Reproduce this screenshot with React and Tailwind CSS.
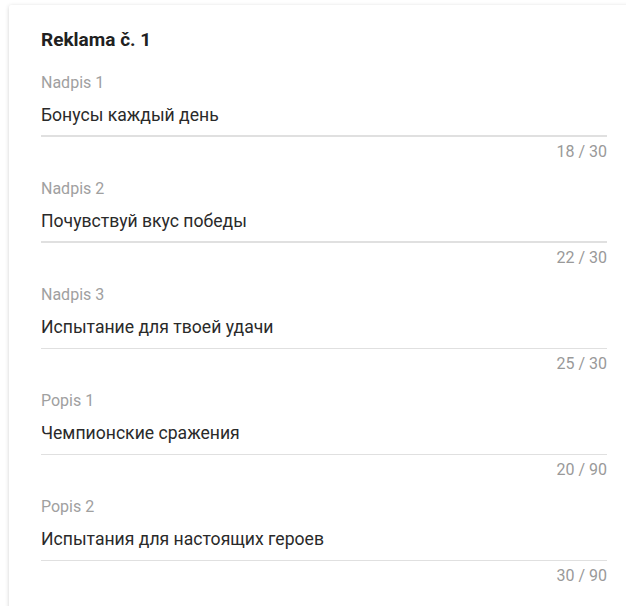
import React from 'react';

const fields = [
    { label: 'Nadpis 1', value: 'Бонусы каждый день', max: 30, thick: true },
    { label: 'Nadpis 2', value: 'Почувствуй вкус победы', max: 30, thick: true },
    { label: 'Nadpis 3', value: 'Испытание для твоей удачи', max: 30 },
    { label: 'Popis 1', value: 'Чемпионские сражения', max: 90 },
    { label: 'Popis 2', value: 'Испытания для настоящих героев', max: 90 },
];

export default function App() {
    return (
        <div className="w-[626px] h-[606px] overflow-hidden bg-white" style={{ fontFamily: 'Roboto, "Noto Sans", sans-serif' }}>
            <div className="ml-[9px] mt-[5px] w-[630px] bg-white shadow-[0_1px_4px_rgba(0,0,0,0.18)] rounded-[2px] px-[32px] pt-[23px] pb-10">
                <h2 className="text-[19px] leading-[24px] font-bold text-[#212121]">Reklama č. 1</h2>

                <div className="mt-[21px] flex flex-col gap-[17px]">
                    {fields.map(f => (
                        <div key={f.label}>
                            <div className="text-[16px] leading-[20px] text-[#a0a0a0]">{f.label}</div>
                            <div className={`mt-[10px] text-[17.6px] leading-[24px] text-[#2a2a2a] ${f.thick ? 'pb-[8px] border-b-2 border-[#e0e0e0]' : 'pb-[9px] border-b border-[#e0e0e0]'}`}>
                                {f.value}
                            </div>
                            <div className="mt-[5px] text-right text-[16px] leading-[20px] text-[#999999]">
                                {f.value.length} / {f.max}
                            </div>
                        </div>
                    ))}
                </div>
            </div>
        </div>
    );
}
